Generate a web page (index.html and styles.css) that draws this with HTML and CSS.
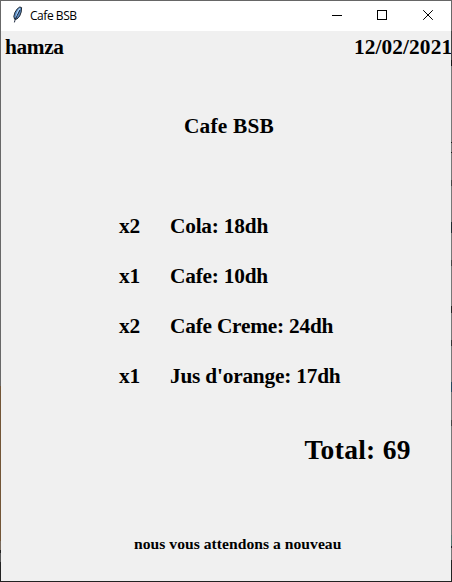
FILE: index.html
```html
<!DOCTYPE html>
<html lang="fr">
<head>
<meta charset="utf-8">
<title>Cafe BSB</title>
<link rel="stylesheet" href="styles.css">
</head>
<body>
<div class="frame">
  <header class="titlebar">
    <svg class="feather" width="16" height="18" viewBox="0 0 16 18">
      <path d="M10.8 1 12.6 1.6 12.2 6 10.7 10 8 13 5.6 13.2 4.8 10.4 6 6.3 8.3 2.8Z" fill="#5a8cc4" stroke="#202832" stroke-width="1"/>
      <path d="M10.7 2.5 8.8 5.8 7.2 11" fill="none" stroke="#b4d8fa" stroke-width="1.3"/>
      <path d="M11 4 8.3 9.2 6 14.2 5.4 16.4" fill="none" stroke="#172238" stroke-width="1"/>
    </svg>
    <span class="title">Cafe BSB</span>
    <svg class="controls" width="110" height="30" viewBox="0 0 110 30" fill="none" stroke="#000">
      <path d="M0 14.5H10" shape-rendering="crispEdges"/>
      <rect x="45.5" y="9.5" width="9" height="9" shape-rendering="crispEdges"/>
      <path d="M91.2 9.2 100.8 18.8M100.8 9.2 91.2 18.8"/>
    </svg>
  </header>
  <main class="receipt">
    <div class="meta"><span class="user">hamza</span><span class="date">12/02/2021</span></div>
    <h1 class="name">Cafe BSB</h1>
    <div class="items">
      <span>x2</span><span>Cola: 18dh</span>
      <span>x1</span><span>Cafe: 10dh</span>
      <span>x2</span><span>Cafe Creme: 24dh</span>
      <span>x1</span><span>Jus d'orange: 17dh</span>
    </div>
    <div class="total">Total: 69</div>
    <p class="thanks">nous vous attendons a nouveau</p>
  </main>
</div>
</body>
</html>
```
FILE: styles.css
```css
* { box-sizing: border-box; }
body { margin: 0; overflow: hidden; }
.frame {
  width: 452px;
  height: 582px;
  padding: 1px;
  background:
    linear-gradient(#686868 0 386px, #725536 386px 541px, #77695c 541px 550px, #222 550px 553px, #555 553px 562px, #222 562px) left / 1px 100% no-repeat,
    linear-gradient(#686868 0 31px, #444 31px 60px, #161616 60px 66px, #777 66px 142px, #161616 142px 143px, #777 143px 152px, #161616 152px 153px, #777 153px 180px, #444 180px 186px, #777 186px 222px, #1e2a30 222px 233px, #777 233px 260px, #444 260px 266px, #777 266px 306px, #222 306px 313px, #777 313px 340px, #333 340px 346px, #777 346px 382px, #24485e 382px 392px, #777 392px 420px, #444 420px 426px, #777 426px 535px, #567672 535px 546px, #182028 546px 548px, #777 548px 560px, #222 560px) right / 1px 100% no-repeat,
    linear-gradient(#666, #666) top / 100% 1px no-repeat,
    #222;
}
.titlebar {
  display: flex;
  height: 30px;
  background: #fff;
}
.feather { margin: 5px 0 0 8px; }
.title {
  flex: 1;
  padding-left: 5px;
  font: 12px/29px "Open Sans", "Noto Sans", sans-serif;
  letter-spacing: -0.45px;
}
.controls { margin-right: 9px; }
.receipt {
  height: 550px;
  overflow: hidden;
  background: #f0f0f0;
  color: #000;
  font: bold 21.33px/32px "Liberation Serif", serif;
}
.meta {
  display: flex;
  justify-content: space-between;
  padding-left: 4px;
  white-space: nowrap;
}
.user { letter-spacing: -0.35px; }
.date {
  width: 97px;
  letter-spacing: 0.1px;
}
.name {
  margin: 47px 0 0 183px;
  font-size: inherit;
  letter-spacing: 0.2px;
}
.items {
  display: grid;
  grid-template-columns: 51px 1fr;
  grid-auto-rows: 50px;
  margin: 59px 0 0 118px;
  line-height: 50px;
  letter-spacing: -0.21px;
}
.total {
  margin: 28px 0 0 303.5px;
  font-size: 27.5px;
  line-height: 42px;
  letter-spacing: 0.3px;
}
.thanks {
  margin: 63px 0 0 133px;
  font-size: 15.6px;
  line-height: 20px;
  letter-spacing: 0.04px;
}
```
